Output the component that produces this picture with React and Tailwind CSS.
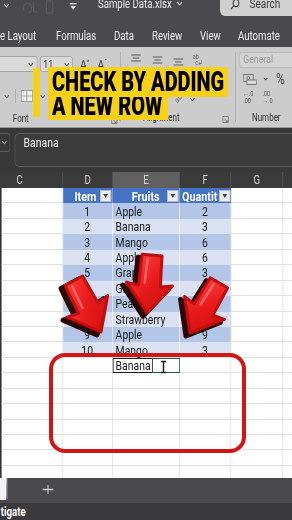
import React from 'react';

// The frame is a squeezed video capture: the UI is laid out 365px wide
// and scaled to 292px horizontally. Overlays are drawn in screen pixels.
const COL = ['w-[108px]', 'w-[62px]', 'w-[84px]', 'w-[64px]', 'w-[65px]', 'w-[60px]'];

const DATA = [
  ['1', 'Apple', '2'],
  ['2', 'Banana', '3'],
  ['3', 'Mango', '6'],
  ['4', 'Apple', '6'],
  ['5', 'Grapes', '3'],
  ['6', 'Grapes', '8'],
  ['7', 'Pear', '4'],
  ['8', 'Strawberry', '5'],
  ['9', 'Apple', '9'],
  ['10', 'Mango', '3'],
];

function Chevron({ className = 'w-[8px] h-[5px]' }) {
  return (
    <svg viewBox="0 0 8 5" className={className} fill="none" stroke="currentColor" strokeWidth="1.2">
      <path d="M1 1l3 3 3-3" />
    </svg>
  );
}

/* ── Title bar + tabs ─────────────────────────────────────────────── */
function TitleBar() {
  return (
    <div className="flex h-[20px] shrink-0 bg-[#4a494d] text-[#ececec]">
      <div className="flex items-start pt-[3px] pl-[4px] w-[122.5px] shrink-0">
        <Chevron className="w-[8px] h-[5px] text-[#d8d8d8]" />
        <svg viewBox="0 0 50 14" className="ml-[14px] -mt-[3px] w-[50px] h-[14px]" fill="none" stroke="#5d5b61" strokeWidth="1.2">
          <path d="M4 10a5 5 0 1 1 5 3" />
          <path d="M16 2v10M16 12h6" />
          <rect x="32" y="1" width="8" height="12" rx="1" />
        </svg>
        <svg viewBox="0 0 9 8" className="ml-[11px] w-[9px] h-[8px]" fill="#e2e2e2">
          <rect x="0" y="0" width="9" height="1.4" />
          <path d="M1 3h7L4.5 7z" />
        </svg>
      </div>
      <div className="flex items-start -mt-[2px] text-[12px] leading-[12px] whitespace-nowrap">
        <span>Sample Data.xlsx</span>
        <Chevron className="ml-[5px] mt-[3px] w-[9px] h-[5px]" />
      </div>
      <div className="ml-auto w-[90px] h-[16px] bg-[#d0d0d0] rounded-bl-[6px] flex items-start pl-[12px] text-[#3c3c3c]">
        <svg viewBox="0 0 13 11" className="w-[13px] h-[11px] -mt-[1px]" fill="none" stroke="#3c3c3c" strokeWidth="1.3">
          <circle cx="8" cy="4" r="3.6" />
          <path d="M5.3 6.6L1.5 10.4" />
        </svg>
        <span className="ml-[12px] -mt-[2px] text-[12.5px] leading-[12px]">Search</span>
      </div>
    </div>
  );
}

function Tabs() {
  return (
    <div className="flex h-[27px] shrink-0 bg-[#4a494d] text-[#f2f2f2] text-[12px] leading-[14px] pt-[9px] whitespace-nowrap">
      <span className="w-[70px] shrink-0">e Layout</span>
      <span className="w-[72.5px] shrink-0">Formulas</span>
      <span className="w-[47.5px] shrink-0">Data</span>
      <span className="w-[60px] shrink-0">Review</span>
      <span className="w-[47.5px] shrink-0">View</span>
      <span className="shrink-0">Automate</span>
    </div>
  );
}

/* ── Ribbon ───────────────────────────────────────────────────────── */
function Launcher() {
  return (
    <svg viewBox="0 0 8 7" className="w-[8px] h-[7px]" fill="none" stroke="#6a6a6a" strokeWidth="0.9">
      <path d="M0.5 0.5h7v6h-7z" />
      <path d="M3 3l3 3M6 4v2H4" />
    </svg>
  );
}

function AlignIcon({ v }) {
  const ys = v === 0 ? [1, 4, 7] : v === 1 ? [3, 6, 9] : [5, 8, 11];
  return (
    <svg viewBox="0 0 14 12" className="w-[14px] h-[12px]" fill="none" stroke="#5a5a5a" strokeWidth="1.2">
      <path d={`M1 ${ys[0]}h12`} />
      <path d={`M3 ${ys[1]}h8`} />
      <path d={`M1 ${ys[2]}h12`} />
    </svg>
  );
}

function FontGroup() {
  return (
    <div className="w-[150px] shrink-0 flex flex-col">
      <div className="flex items-center h-[16px] mt-[9px] text-[#3a3a3a]">
        <div className="w-[47px] h-[16px] bg-[#d9d9d9] border border-l-0 border-[#a3a3a3] rounded-r-[3px] flex items-center justify-end pr-[4px]">
          <Chevron className="w-[7px] h-[5px]" />
        </div>
        <div className="ml-[3px] w-[41px] h-[16px] bg-[#d9d9d9] border border-[#a3a3a3] rounded-[3px] flex items-center justify-between px-[3px] text-[11px] leading-[11px]">
          <span>11</span>
          <Chevron className="w-[7px] h-[5px]" />
        </div>
        <span className="ml-[9px] text-[13px] leading-[13px]">A<sup className="text-[8px]">^</sup></span>
        <span className="ml-[10px] text-[13px] leading-[13px]">A<sup className="text-[8px]">ˇ</sup></span>
      </div>
      <div className="flex items-center h-[16px] mt-[16px] text-[#4a4a4a]">
        <Chevron className="ml-[5px] w-[7px] h-[5px]" />
        <div className="ml-[7px] w-px h-[14px] bg-[#a6a6a6]" />
        <svg viewBox="0 0 15 12" className="ml-[6px] w-[15px] h-[12px]" fill="#f1f1f1" stroke="#8a8a8a" strokeWidth="0.8">
          <rect x="0.5" y="0.5" width="14" height="11" />
          <path d="M7.5 0.5v11M0.5 6h14" />
        </svg>
        <Chevron className="ml-[9px] w-[7px] h-[5px]" />
      </div>
      <div className="flex items-end mt-[10px] pl-[16px] pr-[3px] text-[10px] leading-[10px] text-[#333]">
        <span>Font</span>
        <span className="ml-auto"><Launcher /></span>
      </div>
    </div>
  );
}

function AlignGroup() {
  return (
    <div className="w-[143px] shrink-0 flex flex-col">
      <div className="flex items-center h-[13px] mt-[6px] pl-[11.5px]">
        <AlignIcon v={0} />
        <span className="ml-[13.5px]"><AlignIcon v={1} /></span>
        <span className="ml-[12px]"><AlignIcon v={2} /></span>
        <span className="ml-[11px] flex flex-col text-[7px] leading-[6px] text-[#5a5a5a]">
          <span>ab</span>
          <span className="pl-[3px]">c↲</span>
        </span>
      </div>
      <div className="flex items-center h-[12px] mt-[27px] pl-[68px] text-[#5a5a5a]">
        <span className="inline-block -rotate-45 text-[8px] leading-[8px]">ab</span>
        <Chevron className="ml-[9px] w-[7px] h-[5px]" />
      </div>
      <div className="flex items-end mt-[8px] pl-[28px] pr-[8px] text-[10px] leading-[10px] text-[#333]">
        <span>Alignment</span>
        <span className="ml-auto"><Launcher /></span>
      </div>
    </div>
  );
}

function NumberGroup() {
  return (
    <div className="flex-1 flex flex-col">
      <div className="ml-[4px] mt-[5px] h-[16px] bg-[#d4d4d4] border border-r-0 border-[#b9b9b9] rounded-l-[3px] pl-[4px] text-[11px] leading-[14px] text-[#9b9b9b]">
        General
      </div>
      <div className="flex items-center h-[14px] mt-[4px] pl-[9px] text-[#4a4a4a]">
        <svg viewBox="0 0 17 11" className="w-[17px] h-[11px]" fill="none" stroke="#6a6a6a" strokeWidth="0.9">
          <rect x="0.5" y="0.5" width="12" height="7" />
          <circle cx="6.5" cy="4" r="1.6" />
          <rect x="4.5" y="6" width="12" height="4.5" fill="#d9d9d9" />
        </svg>
        <Chevron className="ml-[8px] w-[6px] h-[4px]" />
        <span className="ml-[10px] text-[15px] leading-[14px]">%</span>
      </div>
      <div className="flex items-center h-[15px] mt-[4px] pl-[9px] text-[7px] leading-[7px] text-[#5a5a5a]">
        <span className="w-[16px] flex flex-col">
          <span>←.0</span>
          <span>.00</span>
        </span>
        <span className="ml-[8px] w-[16px] flex flex-col">
          <span>.00</span>
          <span>→.0</span>
        </span>
      </div>
      <div className="mt-[8px] pl-[20px] text-[10px] leading-[10px] text-[#333]">Number</div>
    </div>
  );
}

function Ribbon() {
  return (
    <div className="flex h-[81px] shrink-0 bg-[#cccccc] border-b border-[#9a9a9a] font-['Roboto',sans-serif]">
      <FontGroup />
      <div className="w-px my-[5px] bg-[#a9a9a9]" />
      <AlignGroup />
      <div className="w-px my-[5px] bg-[#a9a9a9]" />
      <NumberGroup />
    </div>
  );
}

/* ── Formula bar + column headers ─────────────────────────────────── */
function FormulaBar() {
  return (
    <div className="flex h-[44px] shrink-0 bg-[#383838] pt-[5px]">
      <div className="w-[12.5px] h-[19px] border border-l-0 border-[#5c5c5c] rounded-r-[4px] flex items-center justify-center text-[#a8a8a8]">
        <Chevron className="w-[7px] h-[5px]" />
      </div>
      <div className="ml-[5px] flex-1 h-[34px] border border-r-0 border-[#5c5c5c] rounded-l-[6px] bg-[#3c3c3c] pl-[11px] pt-[1px] text-[13px] leading-[16px] text-[#f2f2f2]">
        Banana
      </div>
    </div>
  );
}

function ColumnHeaders() {
  const letters = ['C', 'D', 'E', 'F', 'G', ''];
  return (
    <div className="flex h-[16px] shrink-0 bg-[#3b3b3b] overflow-hidden">
      <div className="flex -ml-[29px] text-[12px] leading-[16px] text-[#d6d6d6]">
        {letters.map((l, i) => (
          <div
            key={i}
            className={`${COL[i]} shrink-0 h-[16px] flex items-center justify-center border-r border-[#565656] ${i === 2 ? 'bg-[#606060]' : ''}`}
          >
            {l}
          </div>
        ))}
      </div>
    </div>
  );
}

/* ── Sheet grid ───────────────────────────────────────────────────── */
function Drop() {
  return (
    <span className="absolute right-[1px] top-[1.5px] w-[14px] h-[12.5px] bg-[#ececec] border border-[#b5b5b5] flex items-center justify-center">
      <svg viewBox="0 0 6 4" className="w-[6px] h-[4px]" fill="#444">
        <path d="M0 0h6L3 4z" />
      </svg>
    </span>
  );
}

function Empty({ i }) {
  return <div className={`${COL[i]} shrink-0 h-full border-r border-b border-[#e1e1e1]`} />;
}

function Sheet() {
  return (
    <div className="h-[290px] shrink-0 overflow-hidden bg-white border-l-[2.5px] border-[#333333]">
      <div className="flex flex-col -ml-[31.5px] text-[13px] text-[#161616]">
        {/* table header */}
        <div className="flex h-[15.45px] shrink-0 font-bold text-white text-[13.5px]">
          <Empty i={0} />
          <div className={`${COL[1]} relative shrink-0 h-full bg-[#4472c4] border-r border-[#8eaadb] flex items-center justify-end pr-[19px]`}>
            Item
            <Drop />
          </div>
          <div className={`${COL[2]} relative shrink-0 h-full bg-[#4472c4] border-r border-[#8eaadb] flex items-center justify-end pr-[24px]`}>
            Fruits
            <Drop />
          </div>
          <div className={`${COL[3]} relative shrink-0 h-full bg-[#4472c4] flex items-center pl-[3px]`}>
            <span className="w-[44px] overflow-hidden whitespace-nowrap">Quantity</span>
            <Drop />
          </div>
          <Empty i={4} />
          <Empty i={5} />
        </div>

        {DATA.map((r, i) => {
          const band = i % 2 === 0 ? 'bg-[#b4c6e7]' : 'bg-[#d9e1f2]';
          return (
            <div key={i} className="flex h-[15.45px] shrink-0 leading-[15px]">
              <Empty i={0} />
              <div className={`${COL[1]} shrink-0 h-full ${band} border-r border-white/70 flex items-center justify-center`}>{r[0]}</div>
              <div className={`${COL[2]} shrink-0 h-full ${band} border-r border-white/70 flex items-center pl-[4px]`}>{r[1]}</div>
              <div className={`${COL[3]} shrink-0 h-full ${band} border-r border-[#e1e1e1] flex items-center justify-center`}>{r[2]}</div>
              <Empty i={4} />
              <Empty i={5} />
            </div>
          );
        })}

        {/* the new row being typed */}
        <div className="flex h-[15.45px] shrink-0">
          <Empty i={0} />
          <Empty i={1} />
          <div className={`${COL[2]} shrink-0 h-full flex`}>
            <div className="w-[50px] h-full border border-[#1e1e1e] pl-[3px] flex items-center leading-[13px]">Banana</div>
            <div className="flex-1 h-full border-y border-r border-[#1d5e36]" />
          </div>
          <Empty i={3} />
          <Empty i={4} />
          <Empty i={5} />
        </div>

        {[0, 1, 2, 3, 4, 5, 6].map(k => (
          <div key={k} className="flex h-[15.45px] shrink-0">
            {[0, 1, 2, 3, 4, 5].map(i => <Empty key={i} i={i} />)}
          </div>
        ))}
      </div>
    </div>
  );
}

/* ── Sheet tabs + status ──────────────────────────────────────────── */
function Footer() {
  return (
    <>
      <div className="flex items-start h-[25px] shrink-0 bg-[#4a494c]">
        <div className="w-[10px] h-[22px] bg-[#f3f3f3] rounded-br-[3px] border-r-2 border-[#6b6b6b]" />
        <svg viewBox="0 0 14 9" preserveAspectRatio="none" className="ml-[42.5px] mt-[7px] w-[14px] h-[9px]" fill="none" stroke="#cfcfcf" strokeWidth="1.3">
          <path d="M7 0v9M0 4.5h14" />
        </svg>
      </div>
      <div className="h-[17px] shrink-0 bg-[#3a393c] pl-[1px] pt-[2px] text-[12px] leading-[14px] font-bold text-white">
        tigate
      </div>
    </>
  );
}

/* ── Video overlays (screen pixels) ───────────────────────────────── */
const ARROW = 'M-10,-58 L10,-58 L11,-27 L23,-29 L0,0 L-23,-29 L-11,-27 Z';

function Arrow({ x, y, r }) {
  return (
    <g transform={`translate(${x} ${y})`}>
      <g transform="translate(-4 3)">
        <path d={ARROW} transform={`rotate(${r})`} fill="#2a0606" stroke="#2a0606" strokeWidth="5" strokeLinejoin="round" />
      </g>
      <path d={ARROW} transform={`rotate(${r})`} fill="url(#arrowFill)" stroke="#c10d0d" strokeWidth="3" strokeLinejoin="round" />
      <path d="M-4,-54 L-5,-30" transform={`rotate(${r})`} stroke="#ff7a7a" strokeWidth="2.5" strokeLinecap="round" opacity="0.7" />
    </g>
  );
}

function Overlays() {
  return (
    <>
      <div className="absolute left-[33px] top-[68px] w-[7px] h-[49px] bg-[#f7d117]" />
      <div className="absolute left-[48px] top-[67px] flex flex-col items-start font-['Roboto',sans-serif] font-black text-black">
        <div className="w-[180px] h-[30px] bg-[#f7d117] pl-[4px] overflow-hidden">
          <span className="inline-block origin-left scale-x-[0.74] whitespace-nowrap text-[27px] leading-[30px]">CHECK BY ADDING</span>
        </div>
        <div className="w-[120px] h-[23px] bg-[#f7d117] pl-[4px] overflow-hidden">
          <span className="inline-block origin-left scale-x-[0.74] whitespace-nowrap text-[27px] leading-[19px]">A NEW ROW</span>
        </div>
      </div>

      <svg className="absolute left-0 top-0 w-[292px] h-[520px] pointer-events-none" viewBox="0 0 292 520">
        <defs>
          <linearGradient id="arrowFill" x1="0" y1="0" x2="1" y2="1">
            <stop offset="0" stopColor="#ff4a4a" />
            <stop offset="0.5" stopColor="#e81a1a" />
            <stop offset="1" stopColor="#c80c0c" />
          </linearGradient>
        </defs>
        <Arrow x={101} y={332} r={-28} />
        <Arrow x={147} y={313} r={5} />
        <Arrow x={190} y={333} r={30} />
        {/* text cursor */}
        <g stroke="#1e1e1e" strokeWidth="1.5" fill="none">
          <path d="M163.5 362v10M161 361.5h5M161 372.5h5" />
        </g>
      </svg>

      <div className="absolute left-[49px] top-[353px] w-[197px] h-[100px] border-[4px] border-[#d21515] rounded-[16px]" />
    </>
  );
}

export default function App() {
  return (
    <div className="relative w-[292px] h-[520px] overflow-hidden bg-[#3a393c] font-['Roboto',sans-serif]">
      <div className="w-[365px] h-[520px] origin-top-left scale-x-[0.8] flex flex-col">
        <TitleBar />
        <Tabs />
        <Ribbon />
        <FormulaBar />
        <ColumnHeaders />
        <Sheet />
        <Footer />
      </div>
      <Overlays />
    </div>
  );
}
